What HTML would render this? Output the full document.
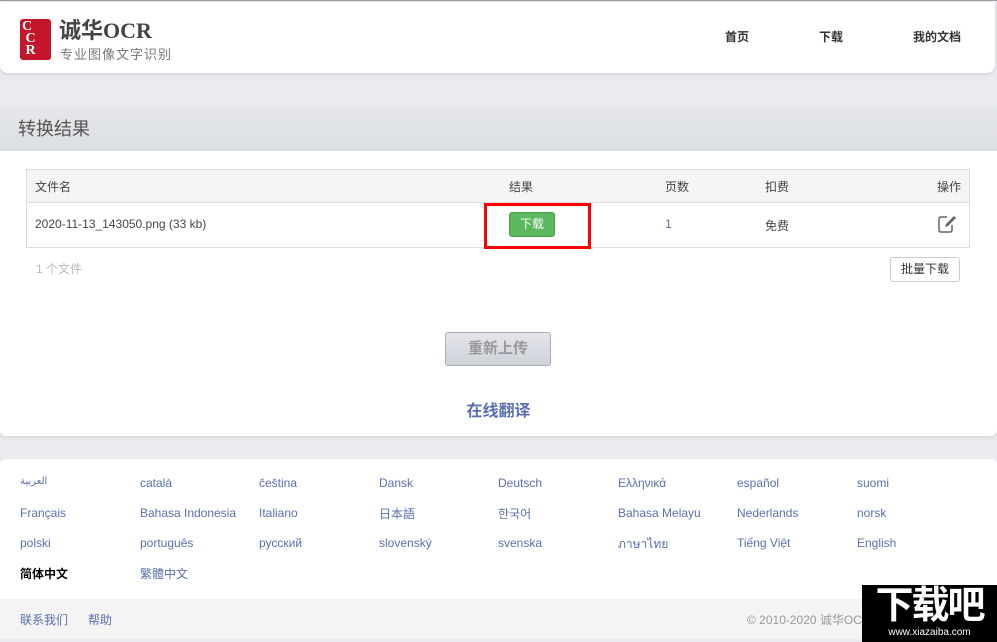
<!DOCTYPE html>
<html><head><meta charset="utf-8"><style>
*{margin:0;padding:0;box-sizing:border-box}
body{width:997px;height:641px;background:#e9ebee;font-family:"Liberation Sans","Noto Sans CJK SC",sans-serif;position:relative;overflow:hidden;border-top:1px solid #999}
.hdr{position:absolute;left:0;top:1px;width:995px;height:71px;background:#fff;border-radius:0 0 8px 8px;box-shadow:0 1px 3px #ccc}
.nav{position:absolute;top:26px;font-size:12px;font-weight:bold;color:#333}
.bar{position:absolute;left:0;top:103px;width:997px;height:47px;background:linear-gradient(#e6e8eb,#dcdfe2);border-top:1px solid #e8eaec;border-radius:6px 6px 0 0}
.bar span{position:absolute;left:18px;top:10px;font-size:18px;color:#555}
.main{position:absolute;left:0;top:150px;width:997px;height:285px;background:#fff;border-radius:0 0 6px 6px;box-shadow:0 1px 3px #ccc}
.tbl{position:absolute;left:26px;top:18px;width:944px;height:79px;border:1px solid #ddd}
.th{position:absolute;left:0;top:0;width:100%;height:33px;background:#f5f5f5;border-bottom:1px solid #ddd}
.t{position:absolute;font-size:12px;color:#444}
.foot{position:absolute;left:0;top:458px;width:997px;height:180px;background:#fff;border-radius:6px}
.fb{position:absolute;left:0;top:140px;width:997px;height:40px;background:#f4f4f5}
.l{position:absolute;font-size:12px;color:#5b6fb0}
</style></head><body>
<div class="hdr">
 <div style="position:absolute;left:20px;top:17px;width:31px;height:41px;background:#c4162a;border-radius:3px"></div>
 <div style="position:absolute;left:22px;top:19px;color:#fff;font:bold 14px 'Liberation Serif';line-height:12px">C<br>&nbsp;C<br>&nbsp;R</div>
 <div style="position:absolute;left:59px;top:17px;font-size:22px;font-weight:bold;color:#444;line-height:24px">诚华<span style="font-family:'Liberation Serif'">OCR</span></div>
 <div style="position:absolute;left:60px;top:42px;font-size:13px;color:#777;letter-spacing:1px">专业图像文字识别</div>
 <div class="nav" style="left:725px">首页</div>
 <div class="nav" style="left:819px">下载</div>
 <div class="nav" style="left:913px">我的文档</div>
</div>
<div class="bar"><span>转换结果</span></div>
<div class="main">
 <div class="tbl">
  <div class="th"></div>
  <div class="t" style="left:8px;top:8px">文件名</div>
  <div class="t" style="left:482px;top:8px">结果</div>
  <div class="t" style="left:638px;top:8px">页数</div>
  <div class="t" style="left:738px;top:8px">扣费</div>
  <div class="t" style="left:910px;top:8px">操作</div>
  <div class="t" style="left:8px;top:47px">2020-11-13_143050.png (33 kb)</div>
  <div style="position:absolute;left:457px;top:33px;width:107px;height:46px;border:3px solid #f00"></div>
  <div style="position:absolute;left:482px;top:42px;width:46px;height:25px;background:#5cb85c;border:1px solid #4a9d4a;border-radius:3px;color:#fff;font-size:12px;text-align:center;line-height:23px">下载</div>
  <div class="t" style="left:638px;top:47px;color:#5b6fb0">1</div>
  <div class="t" style="left:738px;top:47px">免费</div>
  <svg style="position:absolute;left:910px;top:44px" width="20" height="20" viewBox="0 0 20 20"><path d="M10 3H4Q2 3 2 5v11q0 2 2 2h9q2 0 2-2v-5" fill="none" stroke="#666" stroke-width="1.5"/><path d="M8 13l1-3 8-8 2 2-8 8z" fill="#666"/></svg>
 </div>
 <div class="t" style="left:36px;top:109px;color:#bbb">1 个文件</div>
 <div style="position:absolute;left:890px;top:106px;width:70px;height:25px;border:1px solid #ccc;border-radius:3px;font-size:12px;text-align:center;line-height:23px;color:#333">批量下载</div>
 <div style="position:absolute;left:445px;top:181px;width:106px;height:34px;border:1px solid #aab;border-radius:3px;background:linear-gradient(#e4e6ea,#cfd2d9);color:#999;font-size:15px;font-weight:bold;text-align:center;line-height:32px">重新上传</div>
 <div style="position:absolute;left:0;width:997px;top:246px;text-align:center;color:#5b6fb0;font-size:16px;font-weight:bold">在线翻译</div>
</div>
<div class="foot">
 <div class="l" style="left:20px;top:17px;font-size:10px">العربية</div><div class="l" style="left:140px;top:17px">català</div><div class="l" style="left:259px;top:17px">čeština</div><div class="l" style="left:379px;top:17px">Dansk</div><div class="l" style="left:498px;top:17px">Deutsch</div><div class="l" style="left:618px;top:17px">Ελληνικά</div><div class="l" style="left:737px;top:17px">español</div><div class="l" style="left:857px;top:17px">suomi</div>
 <div class="l" style="left:20px;top:47px">Français</div><div class="l" style="left:140px;top:47px">Bahasa Indonesia</div><div class="l" style="left:259px;top:47px">Italiano</div><div class="l" style="left:379px;top:46px">日本語</div><div class="l" style="left:498px;top:46px">한국어</div><div class="l" style="left:618px;top:47px">Bahasa Melayu</div><div class="l" style="left:737px;top:47px">Nederlands</div><div class="l" style="left:857px;top:47px">norsk</div>
 <div class="l" style="left:20px;top:77px">polski</div><div class="l" style="left:140px;top:77px">português</div><div class="l" style="left:259px;top:77px">русский</div><div class="l" style="left:379px;top:77px">slovenský</div><div class="l" style="left:498px;top:77px">svenska</div><div class="l" style="left:618px;top:76px">ภาษาไทย</div><div class="l" style="left:737px;top:77px">Tiếng Việt</div><div class="l" style="left:857px;top:77px">English</div>
 <div class="l" style="left:20px;top:106px;color:#000;font-weight:bold">简体中文</div><div class="l" style="left:140px;top:106px">繁體中文</div>
 <div class="fb">
  <div class="l" style="left:20px;top:12px">联系我们</div><div class="l" style="left:88px;top:12px">帮助</div>
  <div class="l" style="left:747px;top:12px;color:#999">© 2010-2020 诚华OCR</div>
 </div>
</div>
<div style="position:absolute;left:862px;top:584px;width:135px;height:57px;background:#000;color:#fff;text-align:center">
 <div style="font-size:38px;font-weight:bold;line-height:42px;letter-spacing:-2px">下载吧</div>
 <div style="font-size:10px;line-height:12px">www.xiazaiba.com</div>
</div>
</body></html>
